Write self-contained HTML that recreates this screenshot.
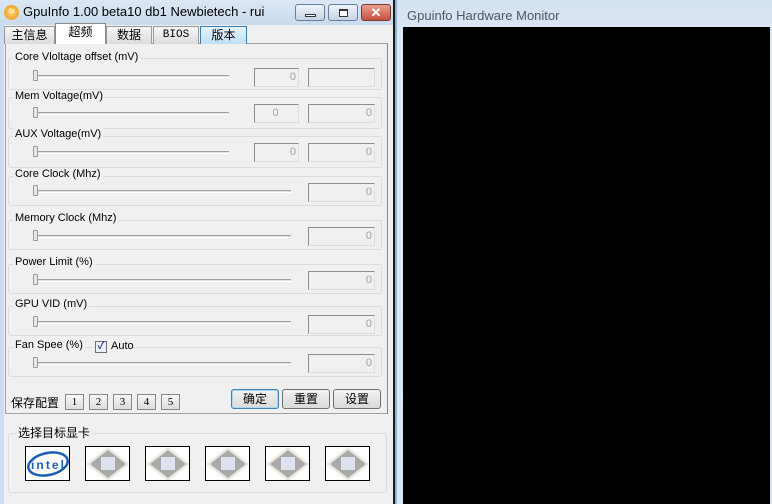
<!DOCTYPE html>
<html><head><meta charset="utf-8"><style>
*{margin:0;padding:0;box-sizing:border-box}
body{width:772px;height:504px;position:relative;overflow:hidden;background:#f0f0f0;font-family:"Liberation Sans","Noto Sans CJK SC",sans-serif;font-size:11px;color:#000}
.a{position:absolute}
.title{left:0;top:0;width:395px;height:25px;background:linear-gradient(#dbe7f4,#c9dbee)}
.rwin{left:396px;top:0;width:376px;height:504px;background:linear-gradient(#d2e0f0,#dfe9f5 40px,#dbe6f3)}
.tab{position:absolute;top:26px;height:18px;border:1px solid #999;border-bottom:none;background:linear-gradient(#f6f6f6,#dcdcdc);font-size:12px;text-align:center;line-height:17px}
.panel{left:5px;top:43px;width:383px;height:371px;background:#f0f0f0;border:1px solid #a0a0a0;border-right:1px solid #888}
.grp{position:absolute;border:1px solid #dcdcdc;border-radius:3px;left:8px;width:374px}
.lbl{position:absolute;background:#f0f0f0;padding:0 2px;font-size:11px;color:#000}
.trk{position:absolute;height:3px;border-top:1px solid #a0a0a0;border-bottom:1px solid #fff;background:#e3e3e3}
.th{position:absolute;width:5px;height:11px;border:1px solid #9a9a9a;background:#e8e8e8;border-radius:1px}
.in{position:absolute;height:19px;border:1px solid #8c8c8c;border-right-color:#ddd;border-bottom-color:#ddd;background:#f0f0f0;color:#a0a0a0;text-align:right;padding-right:2px;line-height:17px;font-size:11px}
.nb{position:absolute;top:394px;width:19px;height:16px;border:1px solid #888;background:linear-gradient(#f8f8f8,#dcdcdc);font-size:11px;text-align:center;line-height:14px;font-family:"Liberation Serif",serif}
.bt{position:absolute;top:389px;width:48px;height:20px;border:1px solid #707070;border-radius:3px;background:linear-gradient(#f2f2f2,#dadada);text-align:center;line-height:18px;font-size:12px}
.ic{position:absolute;top:446px;width:45px;height:35px;border:1px solid #000;background:#fff;overflow:hidden}
</style></head><body>
<div class="a title"></div>
<div class="a" style="left:4px;top:5px;width:15px;height:15px;border-radius:50%;background:radial-gradient(#ffd070,#f09010);font-size:6px;color:#fff;text-align:center;line-height:15px;font-weight:bold">Gi</div>
<div class="a" style="left:23px;top:4px;font-size:13px">GpuInfo 1.00 beta10 db1 Newbietech - rui</div>
<div class="a" style="left:295px;top:4px;width:30px;height:17px;border:1px solid #6a7e9a;border-radius:3px;background:linear-gradient(#eef3fa,#c6d4e6)"><div class="a" style="left:9px;top:9px;width:11px;height:3px;border:1px solid #333;background:#fff"></div></div>
<div class="a" style="left:328px;top:4px;width:30px;height:17px;border:1px solid #6a7e9a;border-radius:3px;background:linear-gradient(#eef3fa,#c6d4e6)"><div class="a" style="left:10px;top:4px;width:9px;height:8px;border:1px solid #333;border-top-width:2px;background:#fff"></div></div>
<div class="a" style="left:361px;top:4px;width:30px;height:17px;border:1px solid #7a3a30;border-radius:3px;background:linear-gradient(#e8a090,#c75040);color:#fff;font-weight:bold;text-align:center;line-height:15px;font-size:13px">✕</div>
<div class="a rwin"></div>
<div class="a" style="left:393px;top:0;width:2px;height:504px;background:#1a1a1a"></div>
<div class="a" style="left:395px;top:0;width:2px;height:504px;background:#8fb4dc"></div>
<div class="a" style="left:407px;top:8px;font-size:13px;color:#505560">Gpuinfo Hardware Monitor</div>
<div class="a" style="left:403px;top:27px;width:367px;height:477px;background:#000"></div>
<div class="a" style="left:0;top:25px;width:4px;height:479px;background:#cddcee"></div>

<div class="a panel"></div>
<div class="tab" style="left:4px;width:51px">主信息</div>
<div class="tab" style="left:55px;top:23px;height:21px;width:51px;background:#fff;border-color:#888">超频</div>
<div class="tab" style="left:106px;width:46px">数据</div>
<div class="tab" style="left:153px;width:46px;font-family:'Liberation Mono',monospace;font-size:11px">BIOS</div>
<div class="tab" style="left:200px;width:47px;background:linear-gradient(#e6f3fb,#bfe0f5);border-color:#3c7fb1">版本</div>

<div class="grp" style="top:58px;height:32px"></div><div class="lbl" style="left:13px;top:51px">Core Vloltage offset (mV)</div>
<div class="trk" style="left:33px;top:75px;width:196px"></div><div class="th" style="left:33px;top:70px"></div>
<div class="in" style="left:254px;top:68px;width:45px">0</div><div class="in" style="left:308px;top:68px;width:67px"></div>

<div class="grp" style="top:97px;height:32px"></div><div class="lbl" style="left:13px;top:90px">Mem Voltage(mV)</div>
<div class="trk" style="left:33px;top:112px;width:196px"></div><div class="th" style="left:33px;top:107px"></div>
<div class="in" style="left:254px;top:104px;width:45px;text-align:center">0</div><div class="in" style="left:308px;top:104px;width:67px">0</div>

<div class="grp" style="top:136px;height:32px"></div><div class="lbl" style="left:13px;top:128px">AUX Voltage(mV)</div>
<div class="trk" style="left:33px;top:151px;width:196px"></div><div class="th" style="left:33px;top:146px"></div>
<div class="in" style="left:254px;top:143px;width:45px">0</div><div class="in" style="left:308px;top:143px;width:67px">0</div>

<div class="grp" style="top:176px;height:30px"></div><div class="lbl" style="left:13px;top:168px">Core Clock (Mhz)</div>
<div class="trk" style="left:33px;top:190px;width:258px"></div><div class="th" style="left:33px;top:185px"></div>
<div class="in" style="left:308px;top:183px;width:67px">0</div>

<div class="grp" style="top:220px;height:30px"></div><div class="lbl" style="left:13px;top:212px">Memory Clock (Mhz)</div>
<div class="trk" style="left:33px;top:235px;width:258px"></div><div class="th" style="left:33px;top:230px"></div>
<div class="in" style="left:308px;top:227px;width:67px">0</div>

<div class="grp" style="top:264px;height:30px"></div><div class="lbl" style="left:13px;top:256px">Power Limit (%)</div>
<div class="trk" style="left:33px;top:279px;width:258px"></div><div class="th" style="left:33px;top:274px"></div>
<div class="in" style="left:308px;top:271px;width:67px">0</div>

<div class="grp" style="top:306px;height:30px"></div><div class="lbl" style="left:13px;top:298px">GPU VID (mV)</div>
<div class="trk" style="left:33px;top:321px;width:258px"></div><div class="th" style="left:33px;top:316px"></div>
<div class="in" style="left:308px;top:315px;width:67px">0</div>

<div class="grp" style="top:347px;height:30px"></div><div class="lbl" style="left:13px;top:339px">Fan Spee (%)</div>
<div class="a" style="left:93px;top:340px;width:40px;height:14px;background:#f0f0f0"></div>
<div class="a" style="left:95px;top:341px;width:12px;height:12px;border:1px solid #707070;background:#eef0f8;font-size:10px;line-height:10px;text-align:center;color:#2a4aa0;font-weight:bold">✓</div>
<div class="a" style="left:111px;top:340px">Auto</div>
<div class="trk" style="left:33px;top:362px;width:258px"></div><div class="th" style="left:33px;top:357px"></div>
<div class="in" style="left:308px;top:354px;width:67px">0</div>

<div class="a" style="left:11px;top:394px;font-size:12px">保存配置</div>
<div class="nb" style="left:65px">1</div><div class="nb" style="left:89px">2</div><div class="nb" style="left:113px">3</div><div class="nb" style="left:137px">4</div><div class="nb" style="left:161px">5</div>
<div class="bt" style="left:231px;border-color:#3c7fb1;box-shadow:inset 0 0 0 1px #a8daf5">确定</div>
<div class="bt" style="left:282px">重置</div>
<div class="bt" style="left:333px">设置</div>

<div class="grp" style="top:433px;height:60px;left:8px;width:379px"></div><div class="lbl" style="left:16px;top:424px;font-size:12px">选择目标显卡</div>
<div class="ic" style="left:25px"><svg width="45" height="35"><ellipse cx="22" cy="17" rx="20" ry="11" fill="none" stroke="#1c5fb0" stroke-width="2.5" transform="rotate(-12 22 17)"/><text x="5" y="22" font-family="Liberation Sans" font-weight="bold" font-size="12" fill="#1c5fb0" textLength="33">intel</text></svg></div>
<div class="ic" style="left:85px"><svg width="45" height="35"><polygon points="22,0 44,17 22,34 0,17" fill="#ece9e0"/><polygon points="22,3 40,17 22,31 4,17" fill="#a9a9a9"/><rect x="15" y="10" width="14" height="13" fill="#dde2ee"/></svg></div>
<div class="ic" style="left:145px"><svg width="45" height="35"><polygon points="22,0 44,17 22,34 0,17" fill="#ece9e0"/><polygon points="22,3 40,17 22,31 4,17" fill="#a9a9a9"/><rect x="15" y="10" width="14" height="13" fill="#dde2ee"/></svg></div>
<div class="ic" style="left:205px"><svg width="45" height="35"><polygon points="22,0 44,17 22,34 0,17" fill="#ece9e0"/><polygon points="22,3 40,17 22,31 4,17" fill="#a9a9a9"/><rect x="15" y="10" width="14" height="13" fill="#dde2ee"/></svg></div>
<div class="ic" style="left:265px"><svg width="45" height="35"><polygon points="22,0 44,17 22,34 0,17" fill="#ece9e0"/><polygon points="22,3 40,17 22,31 4,17" fill="#a9a9a9"/><rect x="15" y="10" width="14" height="13" fill="#dde2ee"/></svg></div>
<div class="ic" style="left:325px"><svg width="45" height="35"><polygon points="22,0 44,17 22,34 0,17" fill="#ece9e0"/><polygon points="22,3 40,17 22,31 4,17" fill="#a9a9a9"/><rect x="15" y="10" width="14" height="13" fill="#dde2ee"/></svg></div>
</body></html>
